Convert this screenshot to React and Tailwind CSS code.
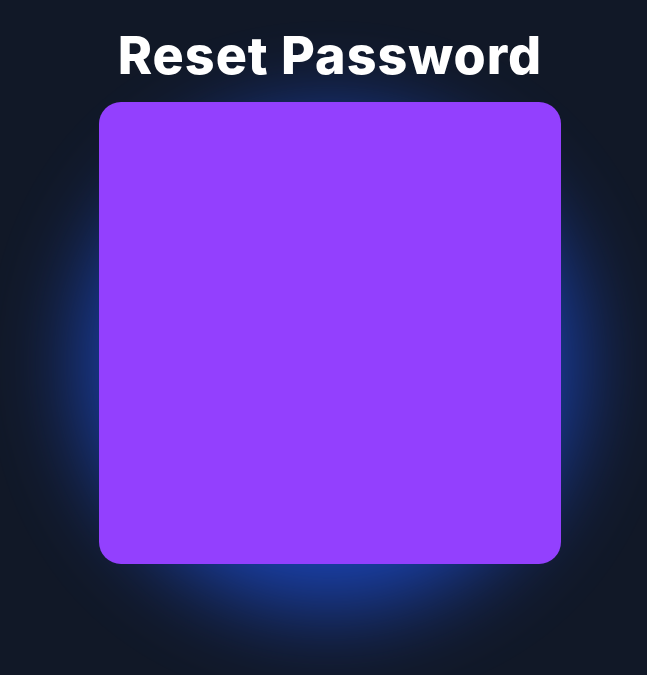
export default function App() {
  return (
    <div className="min-h-screen w-full bg-[#111827] flex flex-col items-center pt-[24px] pl-[13px] overflow-hidden">
      <h1
        className="relative z-10 text-white font-extrabold text-[52px] leading-[64px] tracking-[1px]"
        style={{ fontFamily: "Inter, 'Noto Sans', sans-serif" }}
      >
        Reset Password
      </h1>
      <div className="relative mt-[14px] w-[462px] h-[462px]">
        <div className="absolute left-[-15px] right-[-15px] top-[15px] bottom-[-45px] rounded-full bg-[#1d4ed8] opacity-80 blur-[45px]" />
        <div className="relative w-full h-full rounded-[22px] bg-[#9340fe]" />
      </div>
    </div>
  );
}
